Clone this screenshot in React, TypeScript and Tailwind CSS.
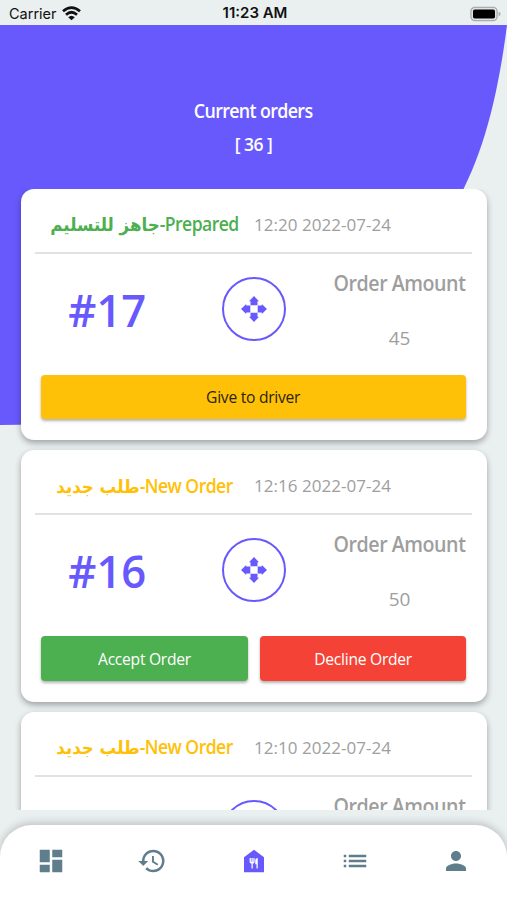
import type { ReactNode } from 'react';
import { MdDashboard, MdFoodBank, MdHistory, MdList, MdPerson } from 'react-icons/md';

type Status = 'prepared' | 'new';

interface Order {
  id: number;
  status: Status;
  time: string;
  amount: number;
}

const ORDERS: Order[] = [
  { id: 17, status: 'prepared', time: '12:20 2022-07-24', amount: 45 },
  { id: 16, status: 'new', time: '12:16 2022-07-24', amount: 50 },
  { id: 15, status: 'new', time: '12:10 2022-07-24', amount: 50 },
];

const IconWifi = () => (
  <svg className="h-[15px] w-[19px]" viewBox="0 0 19 15" fill="none" stroke="#111" strokeWidth={2.7} aria-hidden>
    <path d="M1 5.3Q9.500-2.200 18 5.300" />
    <path d="M4 8.700Q9.500 3.800 15 8.700" />
    <path d="M6.200 11.200Q9.500 8.200 12.800 11.200L9.500 14.300z" fill="#111" stroke="none" />
  </svg>
);

const IconBattery = () => (
  <svg className="h-[16px] w-[31px]" viewBox="0 0 31 16" aria-hidden>
    <rect x="0.900" y="1.400" width="26.200" height="13.200" rx="4" fill="#dfe2e2" stroke="#a9adad" strokeWidth={1.300} />
    <rect x="3" y="3.500" width="22" height="9" rx="1.800" fill="#000" />
    <path d="M28.600 5.800q2 .6 2 2.200t-2 2.200z" fill="#a9adad" />
  </svg>
);

// Four stubby arrows pointing away from the centre
const IconMove = () => (
  <svg className="size-[26px]" viewBox="0 0 26 26" fill="currentColor" aria-hidden>
    <path d="M13 0L18 5.200H16.500V9.300H9.500V5.200H8z" />
    <path d="M13 26L18 20.800H16.500V16.700H9.500V20.800H8z" />
    <path d="M0 13L5.200 8V9.500H9.300V16.500H5.200V18z" />
    <path d="M26 13L20.800 8V9.500H16.700V16.500H20.800V18z" />
  </svg>
);

function StatusBar() {
  return (
    <div className="relative flex h-[25px] shrink-0 items-center justify-between bg-[#eaefef] px-[6px] pt-[2px] font-['Inter',sans-serif] text-[#111]">
      <div className="flex flex-1 items-center gap-[5px] pl-[3px]">
        <span className="text-[14.5px]">Carrier</span>
        <IconWifi />
      </div>
      <span className="text-[15px] font-semibold">11:23 AM</span>
      <div className="flex flex-1 justify-end">
        <IconBattery />
      </div>
    </div>
  );
}

function StatusLabel({ status }: { status: Status }) {
  if (status === 'prepared') {
    return (
      <span className="flex scale-x-[0.925] items-center justify-center text-[#4caf50]" dir="ltr">
        <bdi className="font-['DejaVu_Sans',sans-serif] text-[18px] tracking-normal">جاهز للتسليم</bdi>
        <span>-Prepared</span>
      </span>
    );
  }
  return (
    <span className="flex scale-x-[0.925] items-center justify-center text-[#ffc107]" dir="ltr">
      <bdi className="font-['DejaVu_Sans',sans-serif] text-[18px] tracking-normal">طلب جديد</bdi>
      <span>-New Order</span>
    </span>
  );
}

function ActionButton({ className, children }: { className: string; children: ReactNode }) {
  return (
    <button
      type="button"
      className={`h-[44.5px] flex-1 rounded-[4px] text-[17px] tracking-[-0.3px] shadow-[0_2px_3px_rgba(0,0,0,0.3)] ${className}`}
    >
      <span className="inline-block scale-x-[0.92]">{children}</span>
    </button>
  );
}

function OrderCard({ order }: { order: Order }) {
  return (
    <article className="h-[251.5px] shrink-0 rounded-[13px] bg-white px-[14.500px] shadow-[0_3px_6px_rgba(0,0,0,0.32)]">
      <div className="flex h-[65px] items-center border-b-2 border-[#e0e3e3] pt-[9px]">
        <div className="w-[219px] text-[19px] font-semibold tracking-[-0.6px] whitespace-nowrap">
          <StatusLabel status={order.status} />
        </div>
        <span className="text-[17px] tracking-[0.03px] whitespace-nowrap text-[#9e9e9e]">{order.time}</span>
      </div>

      <div className="flex h-[121px]">
        <div className="flex w-[145px] items-center justify-center pb-[9px] text-[45px] font-semibold text-[#6859fd]">
          <span className="scale-x-[0.97]">#{order.id}</span>
        </div>
        <div className="flex flex-1 items-center justify-center pl-px">
          <div className="mb-[11px] flex size-[64px] items-center justify-center rounded-full border-[2.5px] border-[#6859fd] text-[#6859fd]">
            <IconMove />
          </div>
        </div>
        <div className="flex w-[145px] flex-col items-center pt-[12px] whitespace-nowrap">
          <span className="scale-x-[0.935] text-[21px] leading-[34px] font-semibold tracking-[-0.5px] text-[#9e9e9e]">Order Amount</span>
          <span className="mt-[22px] text-[19px] leading-[32px] text-[#9e9e9e]">{order.amount}</span>
        </div>
      </div>

      <div className="flex gap-3 px-[6px]">
        {order.status === 'prepared' ? (
          <ActionButton className="bg-[#ffc107] text-[#2b2410]">Give to driver</ActionButton>
        ) : (
          <>
            <ActionButton className="bg-[#4caf50] text-white">Accept Order</ActionButton>
            <ActionButton className="bg-[#f44336] text-white">Decline Order</ActionButton>
          </>
        )}
      </div>
    </article>
  );
}

function BottomNav() {
  return (
    <nav className="relative flex h-[75px] shrink-0 items-start rounded-t-[32px] bg-white pt-[21px] text-[#607d8b] shadow-[0_-2px_8px_rgba(0,0,0,0.2)]">
      <span className="flex flex-1 justify-center"><MdDashboard size={30} /></span>
      <span className="flex flex-1 justify-center"><MdHistory size={30} /></span>
      <span className="flex flex-1 justify-center text-[#6859fd]"><MdFoodBank size={30} /></span>
      <span className="flex flex-1 justify-center"><MdList size={30} /></span>
      <span className="flex flex-1 justify-center"><MdPerson size={30} /></span>
    </nav>
  );
}

export default function App() {
  return (
    <div className="relative flex h-[900px] w-[507px] flex-col overflow-hidden bg-[#eaefef] font-['Open_Sans','DejaVu_Sans',sans-serif]">
      {/* Curved backdrop behind the heading and the first card */}
      <svg className="absolute top-[25px] left-0 h-[400px] w-[507px]" viewBox="0 0 507 400" aria-hidden>
        <path d="M0 0H507C499 63 486 119 464 163C410 290 260 400 0 400Z" fill="#6859fd" />
      </svg>

      <StatusBar />

      <header className="relative flex h-[163.7px] shrink-0 flex-col items-center pt-[70px] font-semibold text-white">
        <h1 className="scale-x-[0.94] text-[19px] leading-[32px] tracking-[-0.7px]">Current orders</h1>
        <p className="mt-[2px] text-[17.5px] leading-[30px] tracking-[-0.5px]">[ 36 ]</p>
      </header>

      <main className="relative flex h-[621.3px] shrink-0 flex-col gap-[10px] overflow-hidden px-[20.500px]">
        {ORDERS.map((order) => (
          <OrderCard key={order.id} order={order} />
        ))}
      </main>

      <div className="h-[15px] shrink-0" />
      <BottomNav />
    </div>
  );
}
